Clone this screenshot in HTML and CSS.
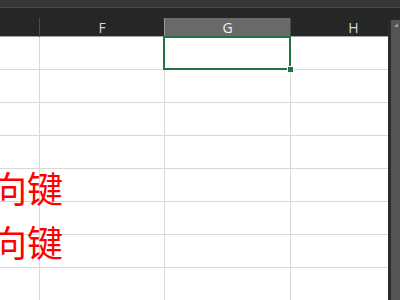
FILE: index.html
```html
<!DOCTYPE html>
<html lang="zh-CN">
<head>
	<meta charset="UTF-8">
	<title>Sheet</title>
	<link rel="stylesheet" href="styles.css">
</head>
<body>
<div class="topbar"></div>
<div class="main">
	<div class="sheet">
		<div class="colhead">
			<div class="ch"></div>
			<div class="ch">F</div>
			<div class="ch sel">G</div>
			<div class="ch">H</div>
		</div>
		<div class="grid" id="grid"></div>
		<div class="selbox"><span class="handle"></span></div>
		<div class="note">
			<div class="line">方向键</div>
			<div class="line">方向键</div>
		</div>
	</div>
	<div class="vscroll">
		<div class="arrow"></div>
		<div class="track"></div>
	</div>
</div>
<script>
	var g = document.getElementById("grid"), h = "";
	for (var i = 0; i < 8 * 4; i++) h += '<div class="cell"></div>';
	g.innerHTML = h;
</script>
</body>
</html>
```

FILE: styles.css
```css
html, body {
	margin: 0;
	height: 100%;
	overflow: hidden;
}
body {
	background: #262626;
	font-family: "Open Sans", "DejaVu Sans", sans-serif;
}
.topbar {
	height: 7px;
	background: #363636;
	border-bottom: 1px solid #474747;
}
.main {
	display: flex;
	height: 292px;
}
.sheet {
	position: relative;
	width: 388px;
	overflow: hidden;
	flex: none;
}
.colhead {
	display: grid;
	grid-template-columns: 40px 125px 126px 126px;
	margin-top: 10px;
	height: 18px;
	border-bottom: 1px solid #a6a6a6;
}
.ch {
	color: #cfd8e0;
	font-size: 14px;
	line-height: 20px;
	text-align: center;
	border-right: 1px solid #4a4a4a;
}
.ch.sel {
	background: #696969;
	color: #f2f2f2;
	border-left: 1px solid #9a9a9a;
	margin-left: -1px;
}
.grid {
	display: grid;
	grid-template-columns: 40px 125px 126px 126px;
	grid-auto-rows: 33px;
	background: #fff;
}
.cell {
	border-right: 1px solid #d8d8d8;
	border-bottom: 1px solid #d8d8d8;
}
.selbox {
	position: absolute;
	left: 163px;
	top: 28px;
	width: 124px;
	height: 30px;
	border: 2px solid #217346;
}
.handle {
	position: absolute;
	right: -5px;
	bottom: -5px;
	width: 5px;
	height: 5px;
	background: #217346;
	border: 1px solid #fff;
}
.note {
	position: absolute;
	left: -9px;
	top: 152px;
	color: #ff0000;
	font-family: "Noto Sans CJK SC", sans-serif;
	font-size: 36px;
	line-height: 54px;
	white-space: nowrap;
}
.line {
	margin-left: -36px;
}
.vscroll {
	flex: 1;
	margin-top: 12px;
	border-left: 3px solid #2b2b2b;
	background: #545454;
}
.arrow {
	width: 0;
	height: 0;
	margin: 3px auto 0;
	border-left: 4px solid transparent;
	border-bottom: 4px solid #a0a0a0;
}
```
